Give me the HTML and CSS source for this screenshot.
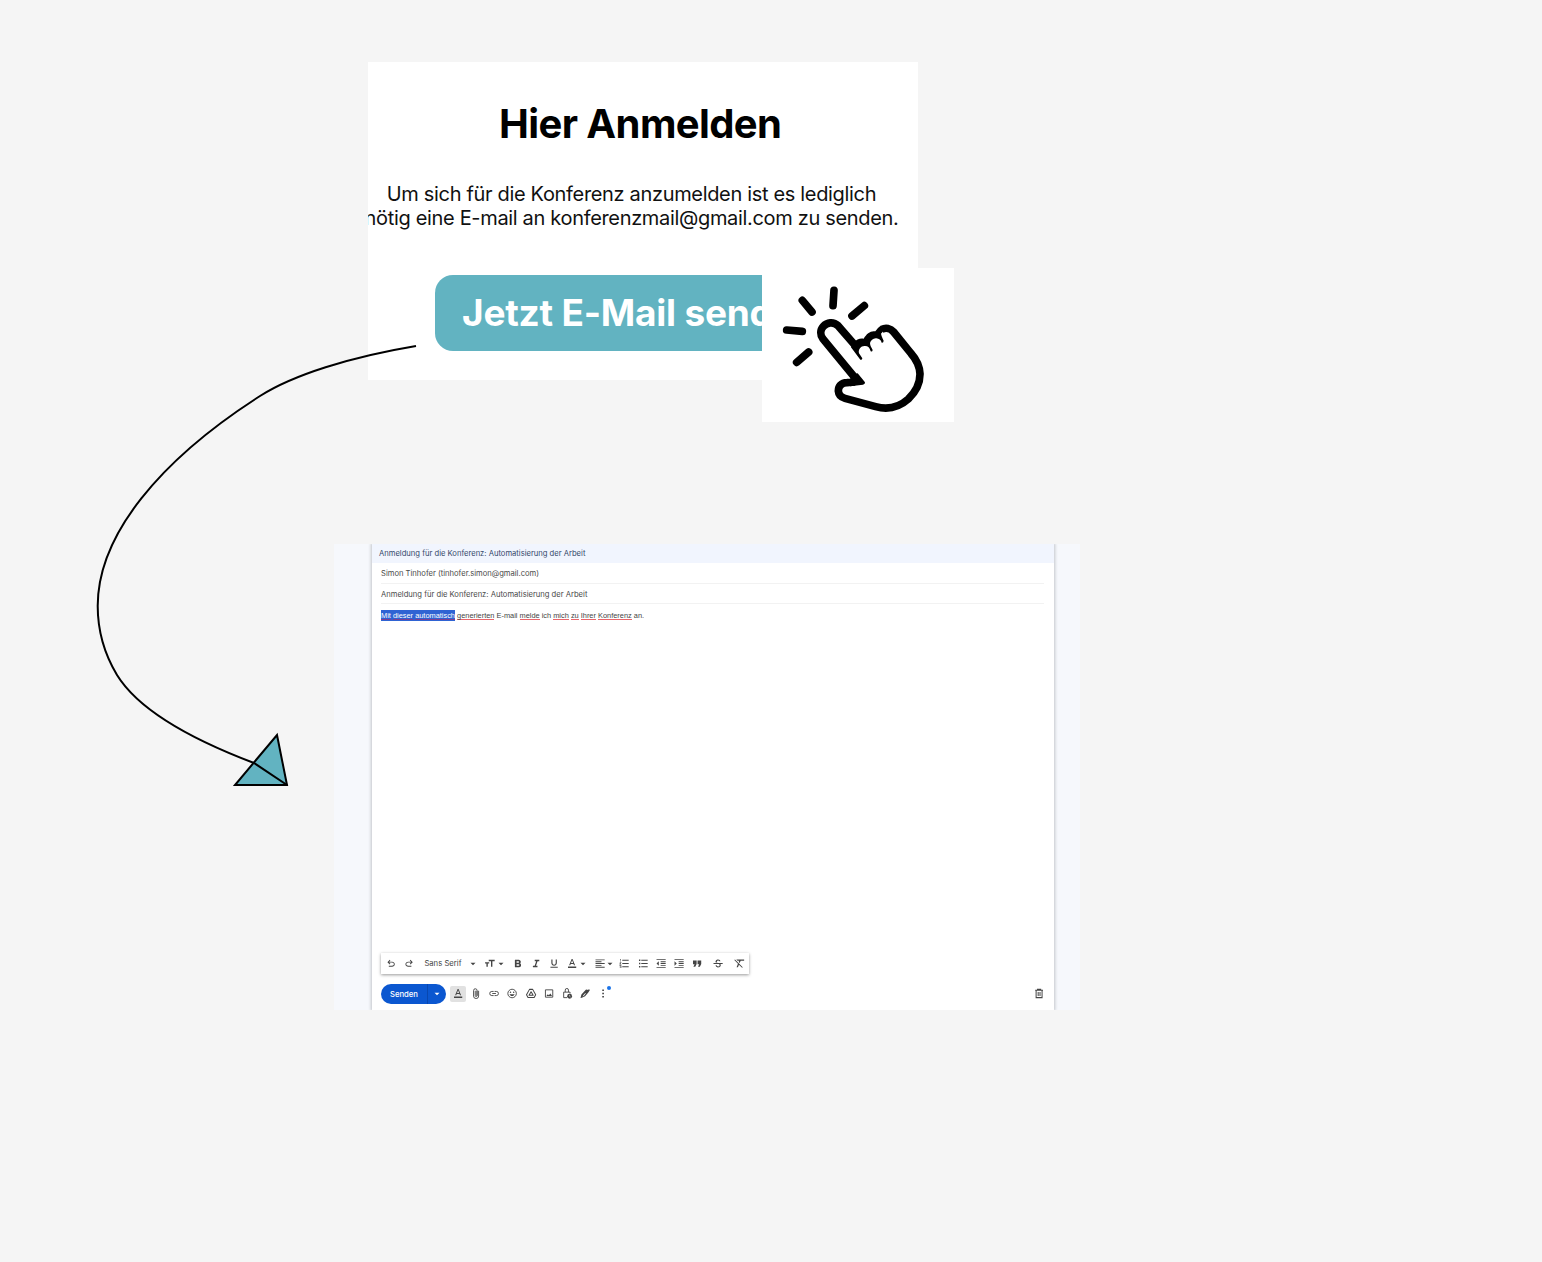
FILE: index.html
```html
<!DOCTYPE html>
<html lang="de">
<head>
<meta charset="utf-8">
<title>Hier Anmelden</title>
<link rel="stylesheet" href="styles.css">
</head>
<body>
<svg class="defs" aria-hidden="true">
  <symbol id="undo" viewBox="0 0 24 24"><path d="M7 19v-2h7.1q1.575 0 2.738-1T18 13.500q0-1.500-1.163-2.500T14.100 10H7.800l2.600 2.600L9 14 4 9l5-5 1.400 1.400L7.800 8h6.300q2.425 0 4.163 1.575T20 13.500q0 2.350-1.738 3.925T14.100 19z"/></symbol>
  <symbol id="redo" viewBox="0 0 24 24"><path d="M17 19v-2H9.900q-1.575 0-2.738-1T6 13.500Q6 12 7.163 11T9.900 10h6.300l-2.600 2.600L15 14l5-5-5-5-1.400 1.400L16.200 8H9.900Q7.475 8 5.737 9.575T4 13.500q0 2.350 1.737 3.925T9.900 19z"/></symbol>
  <symbol id="down" viewBox="0 0 24 24"><path d="M6 9l6 6 6-6z"/></symbol>
  <symbol id="size" viewBox="0 0 24 24"><path d="M9 4v3h5v12h3V7h5V4zM1 12h3v7h3v-7h3V9H1z"/></symbol>
  <symbol id="bold" viewBox="0 0 24 24"><path d="M16.200 11.700c1-.8 1.700-1.900 1.700-3 0-2.600-2-4.700-4.500-4.700H5v16h9.300c2.400 0 4.200-2 4.200-4.400 0-1.700-.9-3.200-2.300-3.900zM8.700 7h3.800a1.600 1.600 0 0 1 0 3.300H8.700zm4.300 10H8.700v-3.400H13a1.700 1.700 0 0 1 0 3.400z"/></symbol>
  <symbol id="italic" viewBox="0 0 24 24"><path d="M9 4v3h3.200L8.800 17H5v3h10v-3h-3.200l3.400-10H19V4z"/></symbol>
  <symbol id="underline" viewBox="0 0 24 24"><path d="M12 17c3.300 0 6-2.700 6-6V3h-2.500v8a3.500 3.500 0 0 1-7 0V3H6v8c0 3.300 2.700 6 6 6zM4 19v2.200h16V19z"/></symbol>
  <symbol id="color" viewBox="0 0 24 24"><path d="M3 18.500h18V22H3zM11 2 5.500 16h2.400l1.100-3h6l1.100 3h2.400L13 2zm-1.300 9L12 4.900l2.300 6.100z"/></symbol>
  <symbol id="align" viewBox="0 0 24 24"><path d="M2 3h20v2H2zm0 4h13v2H2zm0 4h20v2H2zm0 4h13v2H2zm0 4h20v2H2z"/></symbol>
  <symbol id="numbers" viewBox="0 0 24 24"><path d="M8 4h14v2H8zm0 7h14v2H8zm0 7h14v2H8zM3 2h2v6H4V3H3zM2 9h4v1.500L4 13h2v1H2v-1.500L4 10H2zm0 7h4v6H2v-1h3v-1H3v-1h2v-1H2z"/></symbol>
  <symbol id="bullets" viewBox="0 0 24 24"><path d="M8 4h14v2H8zm0 7h14v2H8zm0 7h14v2H8zM3 3.500h3v3H3zm0 7h3v3H3zm0 7h3v3H3z"/></symbol>
  <symbol id="outdent" viewBox="0 0 24 24"><path d="M2 2h20v2H2zm9 5h11v2H11zm0 4h11v2H11zm0 4h11v2H11zM2 20h20v2H2zM2 12l5-5v10z"/></symbol>
  <symbol id="indent" viewBox="0 0 24 24"><path d="M2 2h20v2H2zm9 5h11v2H11zm0 4h11v2H11zm0 4h11v2H11zM2 20h20v2H2zM2 7l5 5-5 5z"/></symbol>
  <symbol id="quote" viewBox="0 0 24 24"><path d="M13 5.500h8V13l-3 6h-4l2.500-5.500H13zm-10 0h8V13l-3 6H4l2.500-5.500H3z"/></symbol>
  <symbol id="strike" viewBox="0 0 24 24"><path d="M2 11h20v2h-5c2.500 4-1 7.500-5 7.500-3 0-5.500-2-5.500-4.500H9c.2 1.400 1.500 2.300 3 2.300 3.500 0 4.500-3 2-5.300H2zM7 10c-2-4 1.500-7 5-7 3 0 5 1.700 5.200 4.200h-2.400C14.500 6 13.500 5.200 12 5.200c-2.500 0-3.800 2.300-1.500 4.800z"/></symbol>
  <symbol id="clear" viewBox="0 0 24 24"><path d="M6 3h17v3h-7.500l-2.200 5-2.200-2.200L12.300 6H8.500zM3 3 1.500 4.500l8 8L6.500 20h3l2.200-5.200L18.500 21.500 20 20z"/></symbol>
  <symbol id="clip" viewBox="0 0 24 24"><path fill="none" stroke="currentColor" stroke-width="2" d="M17.500 6v11.500a5.500 5.500 0 0 1-11 0V5.500a3.800 3.800 0 0 1 7.600 0v11a2 2 0 0 1-4 0V6M14 6v11"/></symbol>
  <symbol id="link" viewBox="0 0 24 24"><path fill="none" stroke="currentColor" stroke-width="2" d="M11 7.500H7a4.500 4.500 0 0 0 0 9h4m2-9h4a4.500 4.500 0 0 1 0 9h-4M8 12h8"/></symbol>
  <symbol id="smile" viewBox="0 0 24 24"><circle cx="12" cy="12" r="9.300" fill="none" stroke="currentColor" stroke-width="2"/><circle cx="8.500" cy="9.500" r="1.600"/><circle cx="15.500" cy="9.500" r="1.600"/><path d="M6.500 13.500h11c-.8 2.300-2.900 4-5.500 4s-4.700-1.700-5.500-4z"/></symbol>
  <symbol id="drive" viewBox="0 0 24 24"><path fill="none" stroke="currentColor" stroke-width="2.200" stroke-linejoin="round" d="M8.500 3h7L22 14.500 18.700 20.500H5.300L2 14.500zM12 8 7.500 16h9z"/></symbol>
  <symbol id="image" viewBox="0 0 24 24"><path fill="none" stroke="currentColor" stroke-width="2" d="M4 4h16v16H4z"/><path d="M6 17.500l3.200-4 2.300 2.500 3.200-4 3.800 5.500z"/></symbol>
  <symbol id="lock" viewBox="0 0 24 24"><path fill="none" stroke="currentColor" stroke-width="2" d="M12 21H4.500V9h14v3M8 9V4.500a3.500 3.500 0 0 1 7 0V9"/><circle cx="17.500" cy="18" r="5.300"/><path fill="none" stroke="#fff" stroke-width="1.200" d="M17.500 15v3.200l2.200 1.500"/></symbol>
  <symbol id="pen" viewBox="0 0 24 24"><path d="M2 22l2-8L13.500 4 16 3l2 1.500L20.500 2.500l2 2L19 10l-7 8-7 3zM6.500 18.500l3-1.500 4-5-1-1-4 4z"/></symbol>
  <symbol id="more" viewBox="0 0 24 24"><path d="M10.200 3.200h3.600v3.600h-3.600zm0 7h3.600v3.600h-3.600zm0 7h3.600v3.600h-3.600z"/></symbol>
  <symbol id="trash" viewBox="0 0 24 24"><path fill="none" stroke="currentColor" stroke-width="2.200" d="M3.500 5h17M8.500 4.500V3h7v1.500M5.500 5v16h13V5M10 8.500v9M14 8.500v9"/></symbol>
</svg>

<main class="canvas">
  <section class="signup">
    <h1 class="signup-title">Hier Anmelden</h1>
    <p class="signup-text">Um sich für die Konferenz anzumelden ist es lediglich<br>nötig eine E-mail an konferenzmail@gmail.com zu senden.</p>
    <div class="signup-button">Jetzt E-Mail senden</div>
  </section>

  <div class="tap">
    <svg class="tap-icon" viewBox="21 24 576 462">
      <g fill="none" stroke="#000" stroke-width="23" stroke-linecap="round">
        <path d="M237 91l-3 46M142 121l29 35M328 137l-37 31M95 210l47 4M161 276l-36 31"/>
        <path stroke-linecap="butt" d="M302 258 249 197C235 184 216 187 205 199C195 210 195 225 204 237L308 363M300 366 276 368C258 368 250 380 250 393C251 406 259 412 270 415L362 440C400 450 430 444 460 417C485 393 495 370 495 342C494 318 484 298 468 280L416 216C406 204 392 202 380 208"/>
      </g>
      <path d="M290 345 308 340 330 367Q331 373 324 374L285 379V360zM296 247C305 238 315 234 326 236C335 220 348 211 361 214Q366 205 376 198L388 210 378 221C380 230 384 237 386 242Q385 250 380 248C378 239 372 236 364 235C355 234 347 241 345 249C345 258 350 263 353 270Q352 276 347 274C344 262 338 257 328 258C318 258 309 268 312 280L322 295Q321 301 316 299L288 262z"/>
    </svg>
  </div>

  <section class="mail">
    <div class="compose">
      <header class="compose-head">Anmeldung für die Konferenz: Automatisierung der Arbeit</header>
      <div class="field field-to">Simon Tinhofer (tinhofer.simon@gmail.com)</div>
      <div class="field">Anmeldung für die Konferenz: Automatisierung der Arbeit</div>
      <p class="message"><span class="selected"><u>Mit</u> <u>dieser</u> <u>automatisch</u></span> <u>generierten</u> E-mail <u>melde</u> ich <u>mich</u> <u>zu</u> <u>Ihrer</u> <u>Konferenz</u> an.</p>
      <div class="format">
        <svg class="cell"><use href="#undo"/></svg>
        <svg class="cell"><use href="#redo"/></svg>
        <span class="font-name">Sans Serif</span>
        <svg class="caret"><use href="#down"/></svg>
        <svg class="cell size"><use href="#size"/></svg>
        <svg class="caret near"><use href="#down"/></svg>
        <svg class="cell bold"><use href="#bold"/></svg>
        <svg class="cell"><use href="#italic"/></svg>
        <svg class="cell"><use href="#underline"/></svg>
        <svg class="cell"><use href="#color"/></svg>
        <svg class="caret near"><use href="#down"/></svg>
        <svg class="cell align"><use href="#align"/></svg>
        <svg class="caret near"><use href="#down"/></svg>
        <svg class="cell numbers"><use href="#numbers"/></svg>
        <svg class="cell"><use href="#bullets"/></svg>
        <svg class="cell"><use href="#outdent"/></svg>
        <svg class="cell"><use href="#indent"/></svg>
        <svg class="cell"><use href="#quote"/></svg>
        <svg class="cell spaced"><use href="#strike"/></svg>
        <svg class="cell spaced"><use href="#clear"/></svg>
      </div>
      <footer class="actions">
        <div class="send"><span class="send-label">Senden</span><span class="send-more"><svg class="caret"><use href="#down"/></svg></span></div>
        <span class="active"><svg class="cell"><use href="#color"/></svg></span>
        <svg class="cell"><use href="#clip"/></svg>
        <svg class="cell"><use href="#link"/></svg>
        <svg class="cell"><use href="#smile"/></svg>
        <svg class="cell"><use href="#drive"/></svg>
        <svg class="cell"><use href="#image"/></svg>
        <svg class="cell"><use href="#lock"/></svg>
        <svg class="cell"><use href="#pen"/></svg>
        <span class="more"><svg class="cell"><use href="#more"/></svg><i class="dot"></i></span>
        <svg class="cell trash"><use href="#trash"/></svg>
      </footer>
    </div>
  </section>

  <svg class="arrow" viewBox="0 0 1542 1262">
    <path fill="#62b3c1" d="M277 735l10 50h-52z"/>
    <path d="M416 346C350 357 293 375 260 396C160 460 97.700 535 97.700 606C97.700 632 105 655 117 675C138 709 188 738 254 763L287 785"/>
  </svg>
</main>
</body>
</html>
```
FILE: styles.css
```css
* { box-sizing: border-box; }
body { margin: 0; background: #f5f5f5; font-family: Inter, "Liberation Sans", sans-serif; }
.defs { display: none; }
.canvas { position: relative; width: 1542px; height: 1262px; overflow: hidden; }

.signup { position: absolute; left: 368px; top: 62px; width: 550px; height: 318px; overflow: hidden; background: #fff; color: #000; }
.signup-title { margin: 37px 0 0 131px; font-size: 40px; line-height: 49px; font-weight: 700; letter-spacing: -0.600px; white-space: nowrap; }
.signup-text { margin: 34px 0 0 -8px; width: 543px; color: #111; font-size: 20px; line-height: 24px; letter-spacing: -0.330px; text-align: center; white-space: nowrap; }
.signup-button { margin: 45px 0 0 67px; width: 420px; height: 76px; padding-left: 27px; border-radius: 18px; background: #62b3c1; color: #fff; font-size: 37px; line-height: 75px; font-weight: 700; letter-spacing: -0.220px; white-space: nowrap; }

.tap { position: absolute; left: 762px; top: 268px; width: 192px; height: 154px; background: #fff; }
.tap-icon { display: block; width: 100%; height: 100%; }

.arrow { position: absolute; inset: 0; width: 1542px; height: 1262px; fill: none; stroke: #000; stroke-width: 2; }

.mail { position: absolute; left: 334px; top: 544px; width: 746px; height: 466px; overflow: hidden; padding: 0 26px 0 38px; background: #f6f8fc; }
.compose { display: flex; flex-direction: column; height: 466px; background: #fff; box-shadow: 0 0 3px 1px #c2c5ca; color: #4a4a4a; font-family: Inter, sans-serif; font-size: 7.610px; }
.compose-head { height: 19px; padding-left: 7px; background: #f1f5fe; color: #35496b; line-height: 19px; }
.field { height: 20px; margin: 0 10px 0 9px; border-bottom: 1px solid #f2f2f2; line-height: 21px; white-space: nowrap; }
.field-to { height: 21px; }
.message { margin: 6px 0 0 9px; font-family: "Liberation Sans", sans-serif; font-size: 7.400px; line-height: 12px; color: #444; white-space: nowrap; }
.message u { display: inline-block; height: 10px; line-height: 11px; text-decoration: none; border-bottom: 1px solid #e8666b; }
.selected { display: inline-block; height: 11px; line-height: 11px; background: #2f63d3; color: #fff; }
.selected u { border-color: #7d3f90; }

.cell { flex: none; width: 18.200px; height: 11px; fill: currentColor; }
.caret { flex: none; width: 10px; height: 10px; fill: currentColor; }
.format { display: flex; align-items: center; width: 368px; height: 21px; margin: auto 0 0 9px; padding-left: 1px; background: #fff; box-shadow: 0 1px 3px #999; color: #444; }
.font-name { width: 43px; margin-left: 6px; font-size: 7.700px; white-space: nowrap; }
.format .caret { margin-left: 0.500px; }
.format .size { margin-left: 3.500px; }
.format .near { margin-left: -4px; }
.format .bold { margin-left: 3.200px; }
.format .align { margin-left: 3.500px; }
.format .numbers { margin-left: 0.300px; }
.format .spaced { margin-left: 2.700px; }

.actions { display: flex; align-items: center; height: 20px; margin: 10px 6px 6px 9px; color: #444; }
.actions > .cell, .more { margin-bottom: 1px; }
.send { display: flex; width: 65px; height: 20px; border-radius: 10px; background: #0b57d0; color: #fff; overflow: hidden; }
.send-label { width: 47px; padding-left: 9px; border-right: 1px solid #0847b0; font-size: 7.700px; line-height: 21px; font-weight: 500; }
.send-more { display: flex; flex: 1; align-items: center; justify-content: center; }
.active { display: flex; align-items: center; justify-content: center; width: 16px; height: 16px; margin: 0 1px 0 4px; padding-bottom: 1px; border-radius: 2px; background: #e1e1e1; }
.more { position: relative; display: flex; }
.dot { position: absolute; left: 13px; top: -2px; width: 4px; height: 4px; border-radius: 50%; background: #1a73e8; }
.actions .trash { margin-left: auto; }
```
